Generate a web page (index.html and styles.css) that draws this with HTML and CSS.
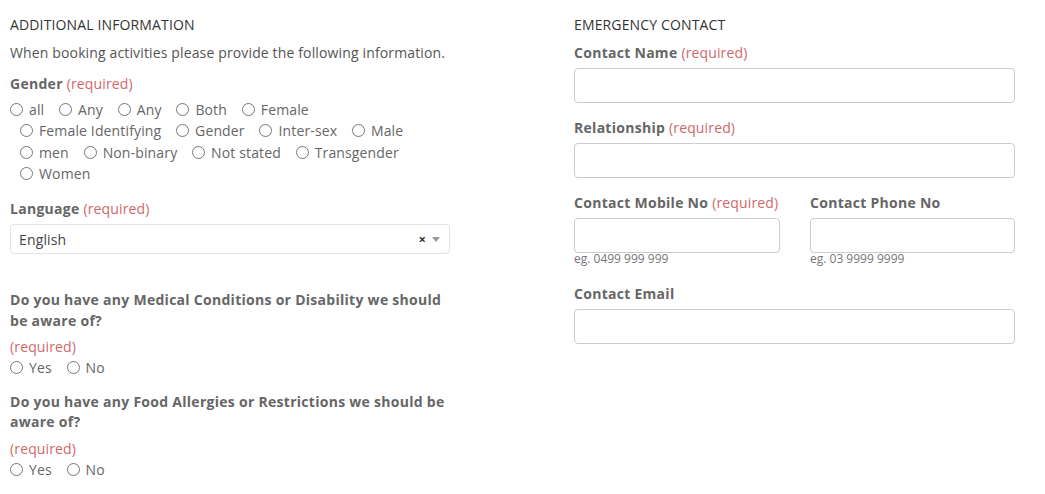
FILE: index.html
```html
<!DOCTYPE html>
<html>
<head>
<meta charset="utf-8">
<link rel="stylesheet" href="styles.css">
</head>
<body>
<div class="page">
  <section class="col col-left">
    <h2 class="heading">ADDITIONAL INFORMATION</h2>
    <p class="intro">When booking activities please provide the following information.</p>

    <div class="group group-gender">
      <div class="label">Gender <span class="req">(required)</span></div>
      <div class="radios radios-indent">
        <label class="opt"><span class="dot"></span>all</label>
        <label class="opt"><span class="dot"></span>Any</label>
        <label class="opt"><span class="dot"></span>Any</label>
        <label class="opt"><span class="dot"></span>Both</label>
        <label class="opt"><span class="dot"></span>Female</label>
        <label class="opt"><span class="dot"></span>Female Identifying</label>
        <label class="opt"><span class="dot"></span>Gender</label>
        <label class="opt"><span class="dot"></span>Inter-sex</label>
        <label class="opt"><span class="dot"></span>Male</label>
        <label class="opt"><span class="dot"></span>men</label>
        <label class="opt"><span class="dot"></span>Non-binary</label>
        <label class="opt"><span class="dot"></span>Not stated</label>
        <label class="opt"><span class="dot"></span>Transgender</label>
        <label class="opt"><span class="dot"></span>Women</label>
      </div>
    </div>

    <div class="group group-lang">
      <div class="label">Language <span class="req">(required)</span></div>
      <div class="select">
        <span class="select-value">English</span>
        <span class="select-clear">×</span>
        <span class="select-arrow"></span>
      </div>
    </div>

    <div class="group group-q1">
      <div class="label question">Do you have any Medical Conditions or Disability we should be aware of?</div>
      <div class="req req-block">(required)</div>
      <div class="radios">
        <label class="opt"><span class="dot"></span>Yes</label>
        <label class="opt"><span class="dot"></span>No</label>
      </div>
    </div>

    <div class="group group-q2">
      <div class="label question">Do you have any Food Allergies or Restrictions we should be aware of?</div>
      <div class="req req-block">(required)</div>
      <div class="radios">
        <label class="opt"><span class="dot"></span>Yes</label>
        <label class="opt"><span class="dot"></span>No</label>
      </div>
    </div>
  </section>

  <section class="col col-right">
    <h2 class="heading">EMERGENCY CONTACT</h2>

    <div class="field">
      <div class="label">Contact Name <span class="req">(required)</span></div>
      <div class="input"></div>
    </div>

    <div class="field">
      <div class="label">Relationship <span class="req">(required)</span></div>
      <div class="input"></div>
    </div>

    <div class="field-row">
      <div class="field">
        <div class="label">Contact Mobile No <span class="req">(required)</span></div>
        <div class="input"></div>
        <div class="help">eg. 0499 999 999</div>
      </div>
      <div class="field">
        <div class="label">Contact Phone No</div>
        <div class="input"></div>
        <div class="help">eg. 03 9999 9999</div>
      </div>
    </div>

    <div class="field field-email">
      <div class="label">Contact Email</div>
      <div class="input"></div>
    </div>
  </section>
</div>
</body>
</html>
```

FILE: styles.css
```css
html, body {
  margin: 0;
  padding: 0;
  background: #fff;
}

body {
  font-family: "Open Sans", "Liberation Sans", sans-serif;
  font-size: 14px;
  line-height: 21px;
  letter-spacing: 0.14px;
  color: #666;
}

.page {
  display: grid;
  grid-template-columns: 440px 441px;
  column-gap: 124px;
  padding: 14px 0 0 10px;
  align-items: start;
}

.heading {
  margin: 0;
  font-size: 14px;
  font-weight: 400;
  line-height: 21px;
  color: #333;
}

.intro {
  margin: 7px 0 0;
  color: #555;
}

.label {
  font-weight: 700;
  color: #666;
  letter-spacing: 0.28px;
}

.req {
  font-weight: 400;
  color: #d0686b;
  letter-spacing: 0.14px;
}

.group-gender {
  margin-top: 10px;
}

.group-gender .radios {
  margin-top: 5px;
}

.radios-indent {
  padding-left: 10px;
  text-indent: -10px;
}

.opt {
  display: inline-block;
  text-indent: 0;
  margin-right: 11px;
  white-space: nowrap;
  color: #666;
  line-height: 21.34px;
}

.dot {
  display: inline-block;
  width: 11px;
  height: 11px;
  border: 1px solid #777;
  border-radius: 50%;
  background: #fff;
  margin-right: 6px;
  vertical-align: -1px;
}

.group-lang {
  margin-top: 14px;
}

.select {
  margin-top: 5px;
  height: 28px;
  border: 1px solid #e2e2e2;
  border-radius: 4px;
  display: flex;
  align-items: center;
  padding: 0 8px 0 8px;
}

.select-value {
  flex: 1;
  color: #444;
}

.select-clear {
  font-size: 13px;
  font-weight: 700;
  color: #333;
  margin-right: 6px;
  line-height: 1;
}

.select-arrow {
  width: 0;
  height: 0;
  border-left: 4px solid transparent;
  border-right: 4px solid transparent;
  border-top: 5px solid #999;
  margin-right: 1px;
}

.group-q1 {
  margin-top: 35px;
}

.group-q2 {
  margin-top: 13px;
}

.question {
  line-height: 21px;
}

.group-q2 .question {
  line-height: 20.5px;
}

.req-block {
  margin-top: 5px;
}

.field {
  margin-top: 7px;
}

.col-right > .field + .field,
.col-right > .field-row {
  margin-top: 14px;
}

.col-right > .field-email {
  margin-top: 16px;
}

.field-row .field {
  margin-top: 0;
}

.field-row {
  display: grid;
  grid-template-columns: 206px 205px;
  column-gap: 30px;
}

.input {
  margin-top: 5px;
  height: 33px;
  border: 1px solid #ccc;
  border-radius: 4px;
  background: #fff;
}

.help {
  margin-top: -2px;
  font-size: 12px;
  line-height: 16px;
  color: #777;
  letter-spacing: 0;
}
```
